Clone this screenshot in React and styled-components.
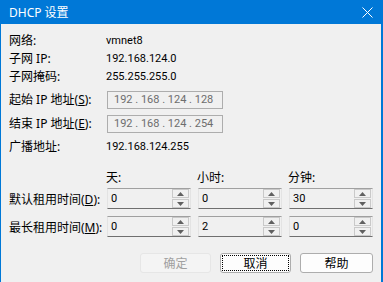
import React from 'react'
import styled, { createGlobalStyle } from 'styled-components'

const Global = createGlobalStyle`
  html, body { margin: 0; padding: 0; background: #f0f0f0; }
  body { font-family: "Noto Sans", "Noto Sans CJK SC", sans-serif; font-size: 12px; color: #000; }
`

const Window = styled.div`
  width: 383px;
  height: 282px;
  background: #0078d7;
  display: flex;
  flex-direction: column;
  box-sizing: border-box;
  overflow: hidden;
`

const TitleBar = styled.div`
  height: 24px;
  flex: none;
  display: flex;
  align-items: center;
  justify-content: space-between;
  padding: 0 10px 0 9px;
  color: #fff;
  font-size: 12px;
`

const Body = styled.div`
  flex: 1;
  margin: 0 2px 0 1px;
  background: #f0f0f0;
  padding: 8px 0 0 8px;
  display: flex;
  flex-direction: column;
`

const Row = styled.div`
  display: grid;
  grid-template-columns: 97px auto;
  align-items: center;
  height: ${p => p.$h || 18}px;
  margin-top: ${p => p.$mt || 0}px;
  line-height: 18px;
  white-space: nowrap;
`

const Num = styled.span`
  font-family: "Roboto", "Noto Sans", sans-serif;
  font-size: 11px;
  color: ${p => p.$color || '#000'};
`

const IpField = styled.div`
  width: 116px;
  height: 18px;
  box-sizing: border-box;
  margin-left: 1px;
  border: 1px solid #adadad;
  background: #f0f0f0;
  display: flex;
  align-items: center;
  padding-left: 6px;
  white-space: pre;
`

const SpinGrid = styled.div`
  display: grid;
  grid-template-columns: 91px 84px 84px 84px;
  column-gap: 7px;
  align-items: center;
  height: ${p => p.$h || 21}px;
  margin-top: ${p => p.$mt || 0}px;
  white-space: nowrap;
`

const HeadCell = styled.span`
  margin-left: -1px;
`

const Spin = styled.div`
  height: 21px;
  box-sizing: border-box;
  border-top: 1px solid #a0a0a0;
  border-left: 1px solid #e3e3e3;
  border-right: 1px solid #e3e3e3;
  border-bottom: 1px solid #6f6f6f;
  background: #f0f0f0;
  display: flex;
  align-items: stretch;
`

const SpinText = styled.div`
  flex: 1;
  padding: 1px 0 0 3px;
  line-height: 16px;
`

const SpinButtons = styled.div`
  width: 17px;
  display: flex;
  flex-direction: column;
  gap: 1px;
  padding: 0 1px 0 0;
`

const SpinBtn = styled.div`
  flex: 1;
  border: 1px solid #c9c9c9;
  background: #f0f0f0;
  display: flex;
  align-items: center;
  justify-content: center;
`

const ButtonBar = styled.div`
  display: flex;
  justify-content: flex-end;
  gap: 9px;
  margin-top: 16px;
  padding-right: 8px;
`

const Button = styled.div`
  width: ${p => p.$w || 71}px;
  height: 20px;
  box-sizing: border-box;
  border-radius: 3px;
  border: 1px solid ${p => (p.$disabled ? '#e6e6e6' : '#adadad')};
  background: ${p => (p.$disabled ? '#f4f4f4' : '#fdfdfd')};
  color: ${p => (p.$disabled ? '#a0a0a0' : '#000')};
  display: flex;
  align-items: center;
  justify-content: center;
  position: relative;
  ${p => p.$focus && `
    &::after {
      content: '';
      position: absolute;
      inset: 1px;
      border: 1px dotted #000;
    }
  `}
`

function Arrow({ down }) {
  return (
    <svg width="7" height="4" viewBox="0 0 7 4">
      <path d={down ? 'M0 0 H7 L3.5 4 Z' : 'M0 4 H7 L3.5 0 Z'} fill="#606060" />
    </svg>
  )
}

function SpinBox({ value }) {
  return (
    <Spin>
      <SpinText><Num>{value}</Num></SpinText>
      <SpinButtons>
        <SpinBtn><Arrow /></SpinBtn>
        <SpinBtn><Arrow down /></SpinBtn>
      </SpinButtons>
    </Spin>
  )
}

export default function App() {
  return (
    <Window>
      <Global />
      <TitleBar>
        <span>DHCP 设置</span>
        <svg width="11" height="11" viewBox="0 0 11 11">
          <path d="M0.5 0.5 L10.5 10.5 M10.5 0.5 L0.5 10.5" stroke="#fff" strokeWidth="1" />
        </svg>
      </TitleBar>
      <Body>
        <Row><span>网络:</span><Num>vmnet8</Num></Row>
        <Row><span>子网 IP:</span><Num>192.168.124.0</Num></Row>
        <Row><span>子网掩码:</span><Num>255.255.255.0</Num></Row>
        <Row $mt={5}>
          <span>起始 IP 地址(<u>S</u>):</span>
          <IpField><Num $color="#6d6d6d">192 . 168 . 124 . 128</Num></IpField>
        </Row>
        <Row $mt={6}>
          <span>结束 IP 地址(<u>E</u>):</span>
          <IpField><Num $color="#6d6d6d">192 . 168 . 124 . 254</Num></IpField>
        </Row>
        <Row $mt={5}><span>广播地址:</span><Num>192.168.124.255</Num></Row>
        <SpinGrid $h={18} $mt={12}>
          <span />
          <HeadCell>天:</HeadCell>
          <HeadCell>小时:</HeadCell>
          <HeadCell>分钟:</HeadCell>
        </SpinGrid>
        <SpinGrid $mt={2}>
          <span>默认租用时间(<u>D</u>):</span>
          <SpinBox value="0" />
          <SpinBox value="0" />
          <SpinBox value="30" />
        </SpinGrid>
        <SpinGrid $mt={7}>
          <span>最长租用时间(<u>M</u>):</span>
          <SpinBox value="0" />
          <SpinBox value="2" />
          <SpinBox value="0" />
        </SpinGrid>
        <ButtonBar>
          <Button $disabled>确定</Button>
          <Button $focus>取消</Button>
          <Button $w={73}>帮助</Button>
        </ButtonBar>
      </Body>
    </Window>
  )
}
